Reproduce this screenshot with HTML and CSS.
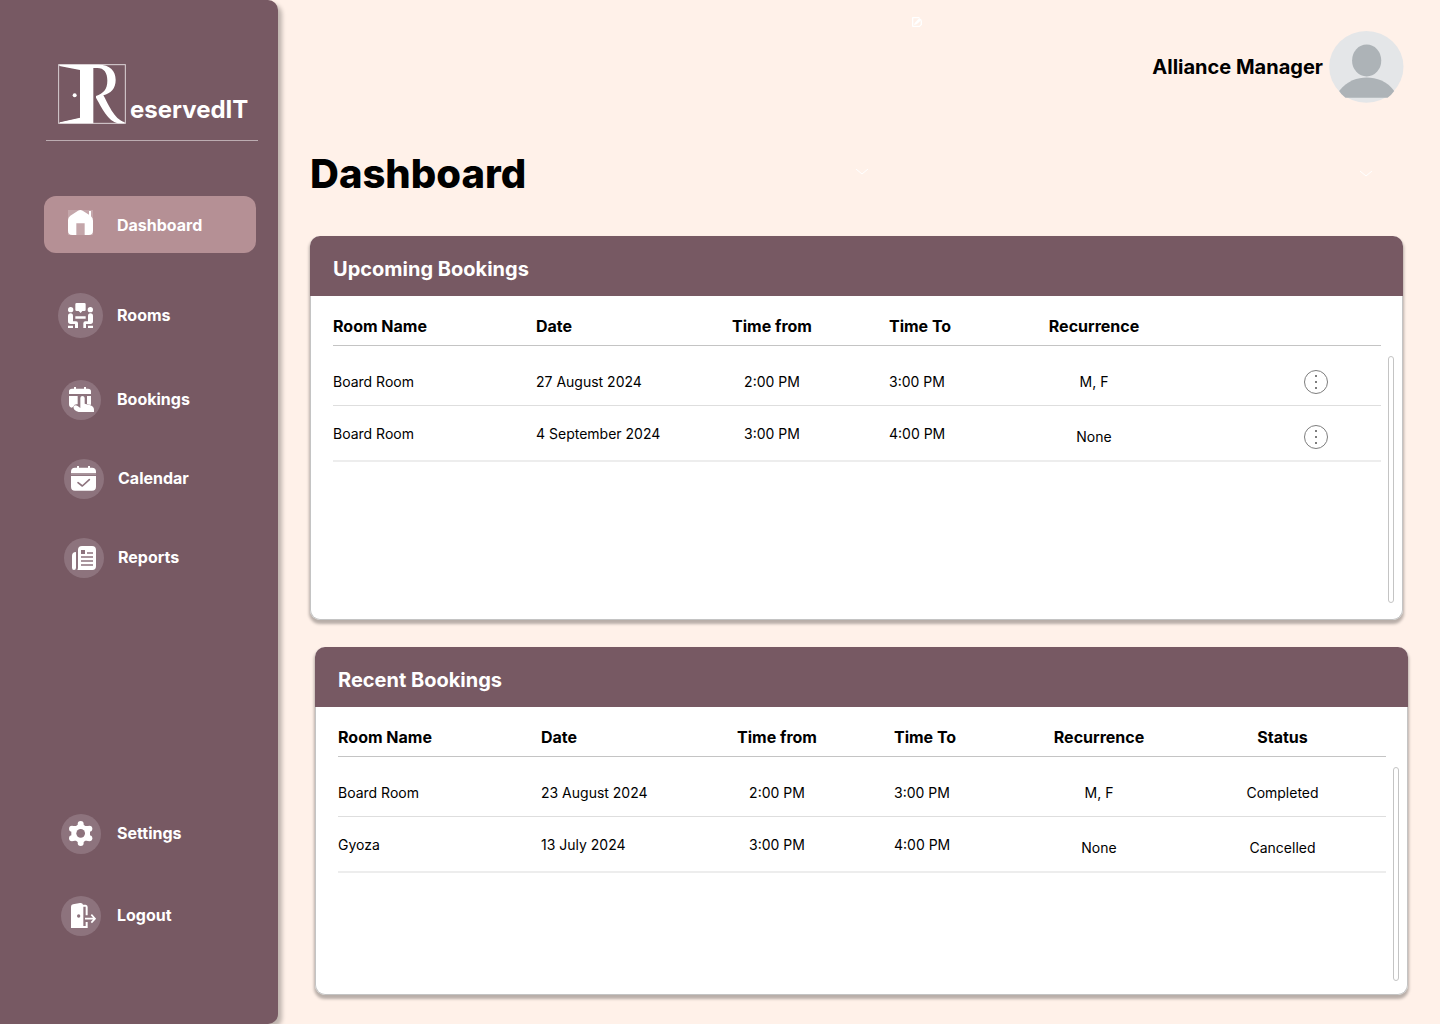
FILE: index.html
```html
<!DOCTYPE html>
<html lang="en">
<head>
<meta charset="utf-8">
<meta name="viewport" content="width=device-width, initial-scale=1">
<title>ReservedIT – Dashboard</title>
<link rel="stylesheet" href="styles.css">
</head>
<body>
<div class="app">
  <aside class="sidebar">
    <div class="brand">
      <svg class="brand-mark" viewBox="54 42 204 180" aria-hidden="true">
        <rect x="56" y="44" width="200" height="176" fill="none" stroke="#fff" stroke-opacity=".75" stroke-width="3"/>
        <path fill="#fff" d="M58 44H176C210 44 227 62 227 90C227 116 212 130 190 136C204 160 222 208 254 217V220H240C208 219 190 182 168 143V138C190 130 202 118 202 92C202 68 192 54 172 54H160V220H59V217L120 203V60L58 48Z"/>
        <path fill="#775963" d="M59 50L120 62V202L59 216Z"/>
        <circle cx="104" cy="136" r="6" fill="#fff"/>
      </svg>
      <span class="brand-name">eservedIT</span>
    </div>
    <nav class="nav" aria-label="Main">
      <a class="nav-item active" href="#">
        <span class="nav-icon"><svg class="glyph" viewBox="0 0 75 75" aria-hidden="true">
          <path fill="#c4a6aa" d="M0 0H75V75H0Z"/>
          <path fill="#fff" d="M0 30Q0 22 7 17L30 2Q37 -2 44 2L63 14V3H69V19Q75 24 75 32V62Q75 75 62 75H50V40H25V75H13Q0 75 0 62Z"/>
        </svg></span>
        <span class="nav-label">Dashboard</span>
      </a>
      <a class="nav-item rooms" href="#">
        <span class="nav-icon"><span class="disc large"><svg class="glyph" viewBox="84 339 75 75" fill="#fff" aria-hidden="true">
          <path d="M110 339H133Q137 339 137 343V359Q137 363 133 363H127L122 369L116 363H110Q106 363 106 359V343Q106 339 110 339Z"/>
          <circle cx="92" cy="359" r="8"/><circle cx="151" cy="359" r="8"/>
          <path d="M84 378Q84 370 92 370Q99 370 99 378V394H108Q114 394 114 400V414H105V402H92Q84 402 84 394ZM159 378Q159 370 151 370Q144 370 144 378V394H136Q130 394 130 400V414H138V402H151Q159 402 159 394ZM84 407H99V414H84ZM144 407H159V414H144ZM106 379H137V386H106Z"/>
        </svg></span></span>
        <span class="nav-label">Rooms</span>
      </a>
      <a class="nav-item bookings" href="#">
        <span class="nav-icon"><span class="disc"><svg class="glyph" viewBox="84 51 75 75" aria-hidden="true">
          <path fill="#fff" d="M87 72V64Q87 56 96 56H102V51H108V56H132V51H138V56H144Q153 56 153 64V72ZM87 78H153V104H147L141 102V78H113V103Q104 101 100 110L95 113Q87 112 87 103Z"/>
          <path fill="#fff" d="M121 84Q121 78 127 78Q134 78 134 84V101L151 106Q162 110 162 119V126H116Q109 125 105 121Q98 114 102 108Q106 103 113 108L121 114Z"/>
        </svg></span></span>
        <span class="nav-label">Bookings</span>
      </a>
      <a class="nav-item inset" href="#">
        <span class="nav-icon"><span class="disc"><svg class="glyph" viewBox="93 289 75 75" aria-hidden="true">
          <path fill="#fff" d="M93 311V306Q93 294 105 294H111V289H117V294H144V289H150V294H156Q168 294 168 306V311ZM93 319H168V351Q168 363 156 363H105Q93 363 93 351Z"/>
          <path stroke="#fff" stroke-opacity=".4" stroke-width="2" d="M93 315H168"/>
          <path fill="none" stroke="#8d737d" stroke-width="5" stroke-linecap="round" stroke-linejoin="round" d="M114 339L127 349L148 330"/>
        </svg></span></span>
        <span class="nav-label">Calendar</span>
      </a>
      <a class="nav-item inset" href="#">
        <span class="nav-icon"><span class="disc"><svg class="glyph" viewBox="93 525 75 75" aria-hidden="true">
          <path fill="#fff" d="M108 546V593Q108 600 102 600Q96 600 96 593V557Q96 547 108 546ZM126 528H156Q168 528 168 540V589Q168 600 157 600H112Q114 597 114 593V540Q114 528 126 528Z"/>
          <path fill="#8d737d" d="M123 540H135V552H123Z"/>
          <path stroke="#8d737d" stroke-width="5" d="M141 549H159M123 561H159M123 573H159M123 585H159"/>
        </svg></span></span>
        <span class="nav-label">Reports</span>
      </a>
    </nav>
    <nav class="nav nav-bottom" aria-label="Account">
      <a class="nav-item" href="#">
        <span class="nav-icon"><span class="disc"><svg class="glyph" viewBox="84 63 75 75" aria-hidden="true">
          <g fill="#fff"><path d="M122 68L136 78H150V122H136L122 133L108 122H94V78H108Z"/>
          <circle cx="122" cy="72" r="9"/><circle cx="122" cy="129" r="9"/>
          <circle cx="96" cy="86" r="9"/><circle cx="148" cy="86" r="9"/>
          <circle cx="96" cy="115" r="9"/><circle cx="148" cy="115" r="9"/></g>
          <circle cx="122" cy="100" r="13" fill="#8d737d"/>
        </svg></span></span>
        <span class="nav-label">Settings</span>
      </a>
      <a class="nav-item" href="#">
        <span class="nav-icon"><span class="disc"><svg class="glyph" viewBox="84 309 75 75" aria-hidden="true">
          <path fill="#fff" d="M93 384V320Q93 314 99 313L120 309Q128 308 129 314H137Q143 315 143 321V346H137V320H130V378H137V366H143V384Z"/>
          <circle cx="116" cy="348" r="5" fill="#8d737d"/>
          <path fill="none" stroke="#fff" stroke-width="5" d="M135 356H164M154 344L165 356L154 368"/>
        </svg></span></span>
        <span class="nav-label">Logout</span>
      </a>
    </nav>
  </aside>

  <main class="main">
    <svg class="ghost ghost-edit" viewBox="0 0 30 30" aria-hidden="true">
      <path fill="#fff" d="M0 3Q0 0 3 0H24L20 4H4V26H22L26 22V12L30 9V23L23 30H3Q0 30 0 27ZM8 18L22 3L29 8L14 22L6 24Z"/>
    </svg>
    <svg class="ghost ghost-left" viewBox="0 0 12 6" aria-hidden="true"><path d="M0 0L6 5L12 0"/></svg>
    <svg class="ghost ghost-right" viewBox="0 0 12 6" aria-hidden="true"><path d="M0 0L6 5L12 0"/></svg>

    <header class="topbar">
      <span class="user-name">Alliance Manager</span>
      <svg class="avatar" viewBox="564 33 225 217" role="img" aria-label="Profile picture">
        <ellipse cx="676" cy="141" rx="112" ry="108" fill="#e4e6e8"/>
        <ellipse cx="677" cy="122" rx="44" ry="48" fill="#adb3b7"/>
        <path fill="#adb3b7" d="M594 214C618 182 650 173 677 173C706 173 740 184 760 214Q752 226 740 234H613Q600 225 594 214Z"/>
      </svg>
    </header>
    <h1 class="page-title">Dashboard</h1>

    <section class="card upcoming">
      <h2 class="card-title">Upcoming Bookings</h2>
      <div class="card-body">
        <table class="bookings-table">
          <colgroup><col class="c-room"><col class="c-date"><col class="c-from"><col class="c-to"><col class="c-rec"><col class="c-last"></colgroup>
          <thead>
            <tr><th>Room Name</th><th>Date</th><th class="mid">Time from</th><th class="to">Time To</th><th class="mid">Recurrence</th><td></td></tr>
          </thead>
          <tbody>
            <tr><td>Board Room</td><td>27 August 2024</td><td class="mid">2:00 PM</td><td class="to">3:00 PM</td><td class="mid">M, F</td>
              <td class="action"><button class="more" type="button" aria-label="Booking options"><svg viewBox="0 0 24 24" aria-hidden="true"><circle cx="12" cy="12" r="11.5"/><path d="M11 5h2v2h-2zM11 11h2v2h-2zM11 17h2v2h-2z"/></svg></button></td></tr>
            <tr><td>Board Room</td><td>4 September 2024</td><td class="mid">3:00 PM</td><td class="to">4:00 PM</td><td class="mid low">None</td>
              <td class="action low"><button class="more" type="button" aria-label="Booking options"><svg viewBox="0 0 24 24" aria-hidden="true"><circle cx="12" cy="12" r="11.5"/><path d="M11 5h2v2h-2zM11 11h2v2h-2zM11 17h2v2h-2z"/></svg></button></td></tr>
          </tbody>
        </table>
        <div class="scroll-track"></div>
      </div>
    </section>

    <section class="card recent">
      <h2 class="card-title">Recent Bookings</h2>
      <div class="card-body">
        <table class="bookings-table">
          <colgroup><col class="c-room"><col class="c-date"><col class="c-from"><col class="c-to"><col class="c-rec"><col class="c-last"></colgroup>
          <thead>
            <tr><th>Room Name</th><th>Date</th><th class="mid">Time from</th><th class="to">Time To</th><th class="mid">Recurrence</th><th class="mid status">Status</th></tr>
          </thead>
          <tbody>
            <tr><td>Board Room</td><td>23 August 2024</td><td class="mid">2:00 PM</td><td class="to">3:00 PM</td><td class="mid">M, F</td><td class="mid status">Completed</td></tr>
            <tr><td>Gyoza</td><td>13 July 2024</td><td class="mid">3:00 PM</td><td class="to">4:00 PM</td><td class="mid low">None</td><td class="mid status low">Cancelled</td></tr>
          </tbody>
        </table>
        <div class="scroll-track"></div>
      </div>
    </section>
  </main>
</div>
</body>
</html>
```
FILE: styles.css
```css
* { box-sizing: border-box; }

body {
  margin: 0;
  background: #fff1e9;
  color: #000;
  font-family: Inter, "Liberation Sans", sans-serif;
}

.app {
  display: flex;
  min-height: 100vh;
}

/* Sidebar */
.sidebar {
  display: flex;
  flex-direction: column;
  flex: none;
  width: 278px;
  padding: 64px 20px 88px 44px;
  background: #775963;
  border-radius: 0 10px 10px 0;
  box-shadow: 4px 4px 4px rgba(0, 0, 0, 0.25);
  color: #fff;
}

.brand {
  display: flex;
  align-items: flex-end;
  gap: 4px;
  margin-left: 2px;
  padding: 0 0 16px 12px;
  border-bottom: 1px solid #bcacb1;
}

.brand-mark {
  flex: none;
  width: 68px;
  height: 60px;
}

.brand-name {
  font-size: 24px;
  font-weight: 700;
  line-height: 28px;
}

.nav {
  display: flex;
  flex-direction: column;
  gap: 39px;
  margin-top: 55px;
}

.nav-bottom {
  gap: 42px;
  margin-top: auto;
}

.nav-item {
  display: flex;
  align-items: center;
  gap: 13px;
  min-height: 40px;
  margin-right: 2px;
  padding-left: 14px;
  border-radius: 12px;
  color: #fff;
  font-size: 16px;
  font-weight: 700;
  line-height: 38px;
  text-decoration: none;
}

.nav-label { padding-bottom: 2px; }

.nav-item.active {
  min-height: 57px;
  background: #b59095;
}

.nav-item.active .nav-icon { padding-bottom: 3px; }
.nav-item.active .nav-label { padding-bottom: 0; }
.nav-item.rooms { min-height: 47px; }

.nav-item.bookings {
  align-items: flex-end;
  min-height: 42px;
}

.nav-icon {
  display: flex;
  justify-content: center;
  width: 46px;
}

.nav-item.inset { gap: 14px; }
.nav-item.inset .nav-icon { justify-content: flex-end; }

.disc {
  display: flex;
  align-items: center;
  justify-content: center;
  width: 40px;
  height: 40px;
  border-radius: 50%;
  background: #8d737d;
}

.disc.large {
  width: 45px;
  height: 45px;
  margin-right: 1px;
}

.glyph {
  width: 25px;
  height: 25px;
  margin: 0 1px 1px 0;
  overflow: visible;
}

.disc.large .glyph { margin: 0; }

/* Main column */
.main {
  position: relative;
  flex: 1;
  min-width: 0;
  padding: 31px 32px 28px;
}

.topbar {
  display: flex;
  align-items: center;
  justify-content: flex-end;
  gap: 6px;
  padding-right: 4px;
}

.user-name {
  font-size: 20px;
  font-weight: 700;
}

.avatar {
  width: 75px;
  height: 72px;
}

.page-title {
  margin: 46px 0 37px;
  font-size: 40px;
  font-weight: 800;
  line-height: 50px;
}

.ghost {
  position: absolute;
  fill: none;
  stroke: #fff;
}

.ghost-edit {
  top: 17px;
  left: 634px;
  width: 10px;
  height: 10px;
  stroke: none;
}

.ghost-left,
.ghost-right {
  width: 12px;
  height: 6px;
}

.ghost-left {
  top: 169px;
  left: 578px;
}

.ghost-right {
  top: 171px;
  right: 68px;
}

/* Cards */
.card {
  display: flex;
  flex-direction: column;
  border-radius: 10px;
  background: #fff;
  box-shadow: 0 3px 3px 1px rgba(0, 0, 0, 0.28);
}

.upcoming {
  min-height: 384px;
  margin-right: 5px;
}

.recent {
  min-height: 348px;
  margin: 27px 0 0 5px;
}

.card-title {
  margin: 0;
  padding: 6px 23px 0;
  border-radius: 10px 10px 0 0;
  background: #775963;
  color: #fff;
  font-size: 20px;
  font-weight: 700;
  line-height: 54px;
}

.card-body {
  display: flex;
  flex: 1;
  align-items: flex-start;
  gap: 7px;
  padding: 0 8px 0 22px;
  border: 1px solid #c4c4c4;
  border-top: 0;
  border-radius: 0 0 10px 10px;
}

.scroll-track {
  flex: none;
  align-self: stretch;
  width: 6px;
  margin: 60px 0 16px;
  border: 1px solid #c4c4c4;
  border-radius: 3px;
}

.recent .scroll-track { margin-bottom: 13px; }

/* Tables */
.bookings-table {
  flex: 1;
  table-layout: fixed;
  border-collapse: separate;
  border-spacing: 0;
  font-size: 14px;
  line-height: 20px;
}

.c-room { width: 203px; }
.c-date { width: 183px; }
.c-from { width: 106px; }
.c-to { width: 184px; }
.c-rec { width: 170px; }
.c-last { width: 202px; }

.bookings-table th,
.bookings-table td {
  height: 60px;
  padding: 12px 0 0;
  border-bottom: 1px solid #dedede;
  text-align: left;
  vertical-align: middle;
}

.bookings-table thead th,
.bookings-table thead td {
  height: 50px;
  padding-top: 10px;
  border-color: #c4c4c4;
  font-size: 16px;
  font-weight: 700;
}

.bookings-table tbody tr:last-child td {
  height: 56px;
  padding-top: 2px;
  border-bottom: 2px solid #ededed;
}

.bookings-table tbody tr:last-child td.low { padding-top: 8px; }

.bookings-table .mid { text-align: center; }
.bookings-table td.to,
.bookings-table th.to { padding-left: 64px; }
.bookings-table td.status,
.bookings-table th.status { padding-right: 5px; }
.bookings-table td.action { padding-left: 125px; }

.more {
  display: block;
  width: 24px;
  height: 24px;
  padding: 0;
  border: 0;
  border-radius: 50%;
  background: none;
  cursor: pointer;
}

.more svg {
  display: block;
  width: 24px;
  height: 24px;
  fill: #7d7d7d;
}

.more circle {
  fill: none;
  stroke: #7d7d7d;
}
```
